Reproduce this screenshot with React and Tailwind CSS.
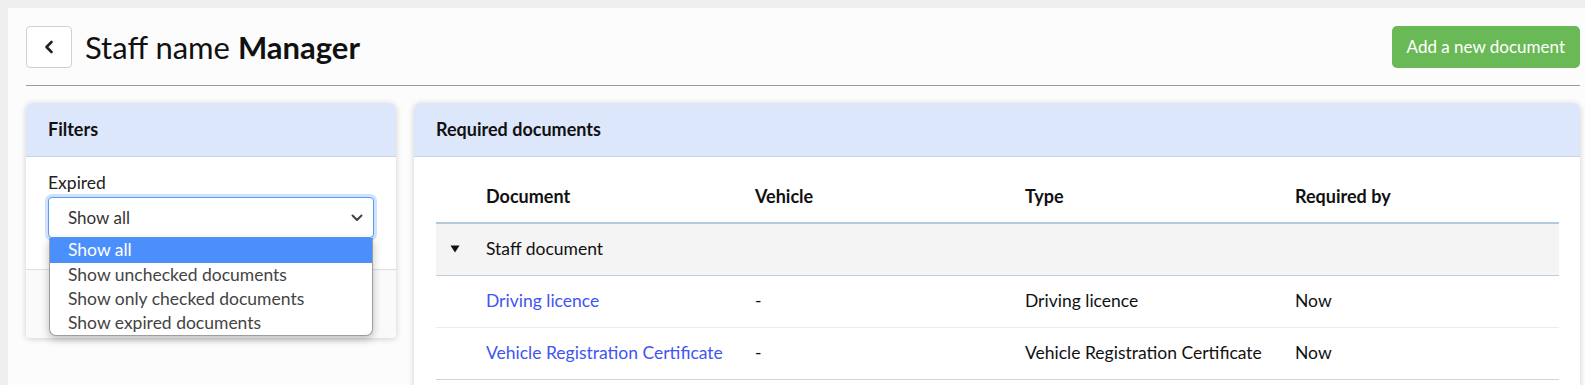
import React from "react";

const options = [
  "Show all",
  "Show unchecked documents",
  "Show only checked documents",
  "Show expired documents",
];

const rows = [
  { name: "Driving licence", vehicle: "-", type: "Driving licence", required: "Now" },
  {
    name: "Vehicle Registration Certificate",
    vehicle: "-",
    type: "Vehicle Registration Certificate",
    required: "Now",
  },
];

const App = () => {
  return (
    <div
      className="w-[1585px] h-[385px] overflow-hidden bg-[#efefef] pt-2 pl-2"
      style={{ fontFamily: "Lato, 'Open Sans', sans-serif" }}
    >
      <div className="h-full bg-[#fcfcfc] pl-[18px] pr-[5px] pt-[18px]">
        {/* Page header */}
        <div className="flex flex-row items-center justify-between h-[42px]">
          <div className="flex flex-row items-center gap-[13px]">
            <button className="w-[46px] h-[42px] flex items-center justify-center rounded-[4px] border border-[#d0d0d0] bg-white">
              <svg width="12" height="14" viewBox="0 0 12 14">
                <path
                  d="M8.5 2 L3.5 7 L8.5 12"
                  fill="none"
                  stroke="#222"
                  strokeWidth="2.6"
                  strokeLinecap="round"
                  strokeLinejoin="round"
                />
              </svg>
            </button>
            <h1 className="text-[31px] leading-none text-[#111]">
              Staff name <span className="font-bold">Manager</span>
            </h1>
          </div>
          <button className="h-[42px] px-[15px] rounded-[5px] bg-[#6ab957] text-white text-[17px]">
            Add a new document
          </button>
        </div>

        <div className="mt-[17px] border-b border-[#9a9a9a]"></div>

        <div className="mt-[17px] flex flex-row items-start gap-[18px]">
          {/* Filters */}
          <div className="w-[370px] shrink-0 rounded-t-[6px] rounded-b-[4px] bg-white shadow-[0_1px_6px_rgba(0,0,0,0.18)] relative">
            <div className="h-[54px] flex items-center px-[22px] bg-[#dde7fc] border-b border-[#c6d3ea] rounded-t-[6px]">
              <p className="text-[18px] font-bold text-[#111]">Filters</p>
            </div>
            <div className="px-[22px] pt-[14px] pb-[31px]">
              <p className="text-[17.5px] text-[#222] leading-[24px]">Expired</p>
              <div className="mt-[2px] h-[41px] flex items-center justify-between pl-[19px] pr-[10px] rounded-[4px] border border-[#5b9bf5] ring-[3px] ring-[#cfe2fd] bg-white">
                <span className="text-[17px] text-[#333]">Show all</span>
                <svg width="12" height="8" viewBox="0 0 12 8">
                  <path
                    d="M1.5 1.5 L6 6 L10.5 1.5"
                    fill="none"
                    stroke="#444"
                    strokeWidth="2"
                    strokeLinecap="round"
                    strokeLinejoin="round"
                  />
                </svg>
              </div>
            </div>
            <div className="h-[69px] border-t border-[#dedede] bg-[#fafafa] rounded-b-[4px]"></div>

            {/* Open dropdown */}
            <div className="absolute left-[23px] top-[135px] w-[324px] bg-white rounded-b-[7px] border border-[#9e9e9e] border-t-0 shadow-[0_3px_8px_rgba(0,0,0,0.25)] overflow-hidden">
              {options.map((opt, index) => (
                <div
                  key={index}
                  className={
                    index === 0
                      ? "h-[25px] flex items-center pl-[18px] text-[17.5px] bg-[#4b8ffd] text-white"
                      : "h-[24px] flex items-center pl-[18px] text-[17.5px] text-[#444]"
                  }
                >
                  {opt}
                </div>
              ))}
            </div>
          </div>

          {/* Required documents */}
          <div className="flex-1 rounded-t-[6px] bg-white shadow-[0_1px_6px_rgba(0,0,0,0.18)] h-[300px]">
            <div className="h-[54px] flex items-center px-[22px] bg-[#dde7fc] border-b border-[#c6d3ea] rounded-t-[6px]">
              <p className="text-[18px] font-bold text-[#111]">Required documents</p>
            </div>
            <div className="pl-[22px] pr-[21px] pt-[14px]">
              <table className="w-full border-collapse text-[17.5px] text-[#111]">
                <thead>
                  <tr className="h-[52px] border-b-2 border-[#b5c9dc]">
                    <th className="w-[50px]"></th>
                    <th className="w-[269px] text-left font-bold text-[18px]">Document</th>
                    <th className="w-[270px] text-left font-bold text-[18px]">Vehicle</th>
                    <th className="w-[270px] text-left font-bold text-[18px]">Type</th>
                    <th className="text-left font-bold text-[18px]">Required by</th>
                  </tr>
                </thead>
                <tbody>
                  <tr className="h-[52px] bg-[#f4f4f4] border-b border-[#bfcfdd]">
                    <td className="pl-[14px]">
                      <svg width="10" height="8" viewBox="0 0 10 8">
                        <path d="M0.5 0.5 L9.5 0.5 L5 7.5 Z" fill="#111" />
                      </svg>
                    </td>
                    <td colSpan={4}>Staff document</td>
                  </tr>
                  {rows.map((row, index) => (
                    <tr
                      key={index}
                      className={
                        index === rows.length - 1
                          ? "h-[52px] border-b border-[#c9d5e0]"
                          : "h-[52px] border-b border-[#ececec]"
                      }
                    >
                      <td></td>
                      <td className="text-[#3f55f2]">{row.name}</td>
                      <td>{row.vehicle}</td>
                      <td>{row.type}</td>
                      <td>{row.required}</td>
                    </tr>
                  ))}
                </tbody>
              </table>
            </div>
          </div>
        </div>
      </div>
    </div>
  );
};

export default App;
